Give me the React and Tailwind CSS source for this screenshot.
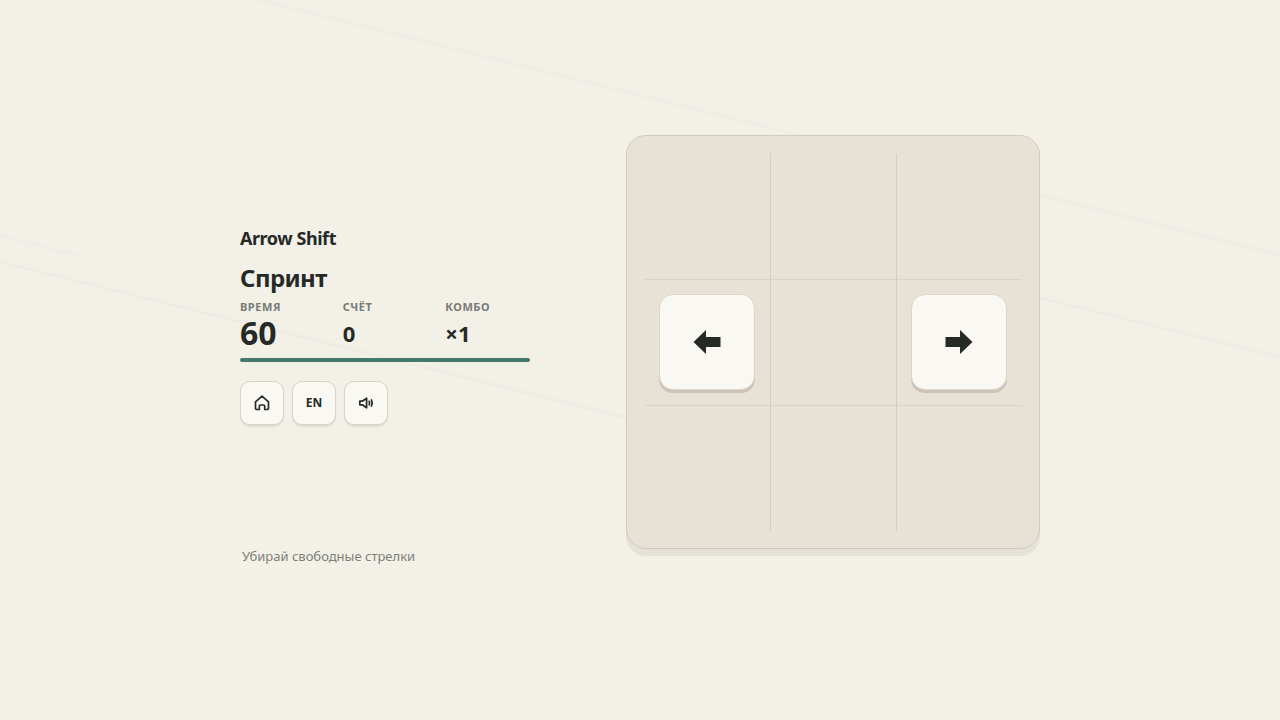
import { useState } from "react";

const stats = [
  { id: "time", label: "Время", value: "60", big: true },
  { id: "score", label: "Счёт", value: "0" },
  { id: "combo", label: "Комбо", value: "×1" },
];

const CELLS = [null, null, null, "left", null, "right", null, null, null];

/* ================= ICONS ================= */
const HomeIcon = () => (
  <svg width="16" height="16" viewBox="0 0 16 16" fill="none" stroke="currentColor" strokeWidth="1.7" strokeLinejoin="round" aria-hidden="true">
    <path d="M1.500 6.800 8 1.200l6.500 5.600v6.400a1.300 1.300 0 0 1-1.300 1.300h-2.500v-3.300a1.200 1.200 0 0 0-1.200-1.200h-3a1.200 1.200 0 0 0-1.200 1.200v3.300H2.800a1.300 1.300 0 0 1-1.300-1.300z" />
  </svg>
);

const SoundIcon = () => (
  <svg width="16" height="16" viewBox="0 0 16 16" fill="none" stroke="currentColor" strokeWidth="1.7" strokeLinejoin="round" strokeLinecap="round" aria-hidden="true">
    <path d="M1.800 6.200h2.500L8.600 3.200v9.600L4.300 9.800H1.800z" />
    <path d="M11.200 6.300q.8 1.700 0 3.400M13.400 5q1.600 3 0 6" />
  </svg>
);

const ArrowIcon = ({ dir }) => (
  <svg
    width="28"
    height="24"
    viewBox="0 0 28 24"
    fill="currentColor"
    className={dir === "left" ? "rotate-180" : ""}
    aria-hidden="true"
  >
    <path d="M.5 7H15V0l12.500 12L15 24v-7H.5z" />
  </svg>
);

/* ================= BACKGROUND ================= */
const Backdrop = () => (
  <svg
    className="absolute inset-0 h-full w-full text-[#f0ece5]"
    viewBox="0 0 1280 720"
    preserveAspectRatio="xMidYMid slice"
    stroke="currentColor"
    strokeWidth="3"
    aria-hidden="true"
  >
    <path d="M250-2 1280 255" opacity=".6" />
    <path d="M0 236 80 256" opacity=".6" />
    <path d="M0 262 640 421" opacity=".8" />
    <path d="M1000 288 1280 357" opacity=".8" />
  </svg>
);

const IconButton = ({ label, onClick, children }) => (
  <button
    type="button"
    aria-label={label}
    onClick={onClick}
    className="flex size-11 items-center justify-center rounded-[10px] border border-[#d9d3c6] bg-[#faf8f3] text-xs font-bold shadow-[0_2px_1px_#e2dcd1]"
  >
    {children}
  </button>
);

const App = () => {
  const [lang, setLang] = useState("EN");
  const [cells, setCells] = useState(CELLS);

  const clearCell = (index) =>
    setCells(cells.map((cell, i) => (i === index ? null : cell)));

  return (
    <div className="relative flex min-h-screen items-center justify-center bg-[#f3f0e8] px-6 pb-[19px] font-['Noto_Sans',sans-serif] text-[#262a26]">
      <Backdrop />

      <main className="relative grid w-full max-w-[800px] grid-cols-[290px_minmax(0,414px)] items-start justify-between">
        {/* ================= PANEL ================= */}
        <section className="pt-[91px]">
          <p className="text-lg leading-6 font-bold tracking-tight">Arrow Shift</p>
          <h1 className="mt-3 text-2xl leading-8 font-bold tracking-tight">Спринт</h1>

          <dl className="mt-[5px] grid grid-cols-3 gap-x-[18px]">
            {stats.map((stat) => (
              <div key={stat.id}>
                <dt className="text-[11px] leading-4 font-bold tracking-wider text-[#777b74] uppercase">
                  {stat.label}
                </dt>
                <dd
                  className={`leading-9 font-bold ${
                    stat.big ? "text-[32px]" : "text-[22px]"
                  }`}
                >
                  {stat.value}
                </dd>
              </div>
            ))}
          </dl>

          <div className="mt-[7px] h-1 rounded-full bg-[#43796a]" />

          <div className="mt-[19px] flex gap-2">
            <IconButton label="Домой">
              <HomeIcon />
            </IconButton>
            <IconButton label="Язык" onClick={() => setLang(lang === "EN" ? "RU" : "EN")}>
              {lang}
            </IconButton>
            <IconButton label="Звук">
              <SoundIcon />
            </IconButton>
          </div>

          <p className="mt-[121px] px-0.5 text-[13px] leading-5 text-[#7c8079]">
            Убирай свободные стрелки
          </p>
        </section>

        {/* ================= BOARD ================= */}
        <section className="aspect-square rounded-[20px] border border-[#d0cbbe] bg-[#e8e1d5] p-[17px] shadow-[0_7px_0_#e5e2da]">
          <div className="grid h-full grid-cols-3 grid-rows-3">
            {cells.map((cell, i) => (
              <div
                key={i}
                className={`min-h-0 border-t border-l pt-[14px] pl-[14px] ${
                  i % 3 > 0 ? "border-l-[#d4ccc0]" : "border-l-transparent"
                } ${i > 2 ? "border-t-[#dad3c7]" : "border-t-transparent"}`}
              >
                {cell && (
                  <button
                    type="button"
                    aria-label={cell === "left" ? "Влево" : "Вправо"}
                    onClick={() => clearCell(i)}
                    className="flex size-24 items-center justify-center rounded-[14px] border border-[#ddd6ca] bg-[#faf8f3] shadow-[0_3px_0_#cbc3b8]"
                  >
                    <ArrowIcon dir={cell} />
                  </button>
                )}
              </div>
            ))}
          </div>
        </section>
      </main>
    </div>
  );
};

export default App;
